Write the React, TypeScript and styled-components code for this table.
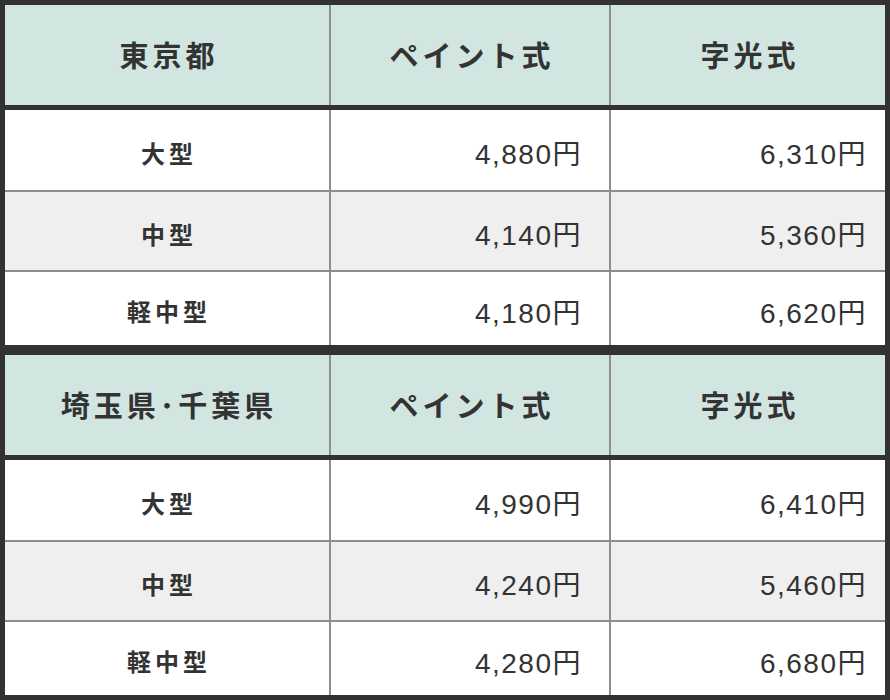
import React from 'react';
import styled, { createGlobalStyle } from 'styled-components';

const GlobalStyle = createGlobalStyle`
  html, body {
    margin: 0;
    padding: 0;
    background: #ffffff;
  }
  body {
    font-family: "Noto Sans CJK JP", "Noto Sans", sans-serif;
    color: #333333;
  }
`;

const Page = styled.div`
  width: 890px;
  height: 700px;
  display: flex;
  flex-direction: column;
`;

const Table = styled.div`
  box-sizing: border-box;
  width: 890px;
  height: 350px;
  border: 5px solid #323232;
  display: flex;
  flex-direction: column;
`;

const HeadRow = styled.div`
  display: grid;
  grid-template-columns: 324px 280px 276px;
  height: 100px;
  border-bottom: 5px solid #323232;
  background: #d1e5e1;
`;

const Body = styled.div`
  flex: 1;
  display: flex;
  flex-direction: column;
`;

const Row = styled.div<{ $striped?: boolean; $last?: boolean }>`
  box-sizing: border-box;
  display: grid;
  grid-template-columns: 324px 280px 276px;
  height: ${(p) => (p.$last ? 'auto' : '80px')};
  flex: ${(p) => (p.$last ? '1' : 'none')};
  background: ${(p) => (p.$striped ? '#efefef' : '#ffffff')};
  & + & {
    border-top: 2px solid #8e8e8e;
  }
`;

const Cell = styled.div<{ $divider?: boolean }>`
  box-sizing: border-box;
  display: flex;
  align-items: center;
  border-left: ${(p) => (p.$divider ? '2px solid #8e8e8e' : 'none')};
`;

const HeadCell = styled(Cell)`
  justify-content: center;
  padding-bottom: 3px;
  padding-left: 4px;
  font-size: 29px;
  font-weight: 700;
  letter-spacing: 4px;
  color: #333333;
`;

const LabelCell = styled(Cell)`
  justify-content: center;
  padding-top: 4px;
  padding-left: 4px;
  font-size: 24px;
  font-weight: 700;
  letter-spacing: 4px;
  color: #333333;
`;

const PriceCell = styled(Cell)<{ $pad: number }>`
  justify-content: flex-end;
  padding-top: 4px;
  padding-right: ${(p) => p.$pad}px;
  font-family: "Liberation Sans", "Noto Sans CJK JP", sans-serif;
  font-size: 28px;
  letter-spacing: 1.5px;
  color: #333333;
`;

interface PriceRow {
  size: string;
  paint: string;
  light: string;
}

interface Region {
  name: string;
  rows: PriceRow[];
}

const regions: Region[] = [
  {
    name: '東京都',
    rows: [
      { size: '大型', paint: '4,880円', light: '6,310円' },
      { size: '中型', paint: '4,140円', light: '5,360円' },
      { size: '軽中型', paint: '4,180円', light: '6,620円' },
    ],
  },
  {
    name: '埼玉県･千葉県',
    rows: [
      { size: '大型', paint: '4,990円', light: '6,410円' },
      { size: '中型', paint: '4,240円', light: '5,460円' },
      { size: '軽中型', paint: '4,280円', light: '6,680円' },
    ],
  },
];

const PriceTable: React.FC<{ region: Region }> = ({ region }) => (
  <Table>
    <HeadRow>
      <HeadCell>{region.name}</HeadCell>
      <HeadCell $divider>ペイント式</HeadCell>
      <HeadCell $divider>字光式</HeadCell>
    </HeadRow>
    <Body>
      {region.rows.map((row, i) => (
        <Row key={row.size} $striped={i === 1} $last={i === region.rows.length - 1}>
          <LabelCell>{row.size}</LabelCell>
          <PriceCell $divider $pad={27}>
            {row.paint}
          </PriceCell>
          <PriceCell $divider $pad={18}>
            {row.light}
          </PriceCell>
        </Row>
      ))}
    </Body>
  </Table>
);

const App: React.FC = () => (
  <>
    <GlobalStyle />
    <Page>
      {regions.map((region) => (
        <PriceTable key={region.name} region={region} />
      ))}
    </Page>
  </>
);

export default App;
